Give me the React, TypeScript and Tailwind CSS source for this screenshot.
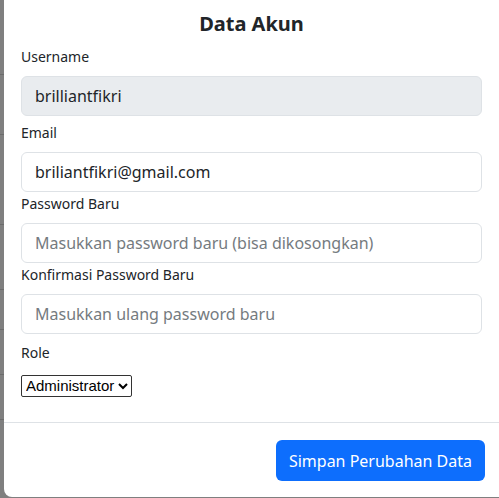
import { useState } from "react";

const fontStack = {
  fontFamily: '"Noto Sans", "Open Sans", sans-serif',
};

function Field({
  label,
  value,
  placeholder,
  disabled,
  className,
}: {
  label: string;
  value?: string;
  placeholder?: string;
  disabled?: boolean;
  className?: string;
}) {
  return (
    <div className={className}>
      <label className="block text-[14px] leading-[20px] text-[#212529] mb-[9px]">
        {label}
      </label>
      <input
        type="text"
        defaultValue={value}
        placeholder={placeholder}
        disabled={disabled}
        className={`block w-full h-[40px] px-[13px] text-[16px] text-[#212529] border border-[#dee2e6] rounded-[6px] outline-none placeholder:text-[#757b80] ${
          disabled ? "bg-[#e9ecef]" : "bg-white"
        }`}
      />
    </div>
  );
}

function App() {
  const [role, setRole] = useState("admin");

  return (
    <div className="flex h-[498px] w-[499px] overflow-hidden bg-[#7f7f7f]" style={fontStack}>
      {/* backdrop peeking out on the left */}
      <div className="w-[4px] flex flex-col">
        <div className="h-[75px] border-b border-[#6c6c6c]" />
        <div className="h-[60px] border-b border-[#6c6c6c]" />
        <div className="h-[90px] border-b border-[#6c6c6c]" />
        <div className="h-[65px] border-b border-[#6c6c6c]" />
        <div className="h-[40px] border-b border-[#6c6c6c]" />
        <div className="h-[45px] border-b border-[#6c6c6c]" />
        <div className="h-[45px] border-b border-[#6c6c6c]" />
      </div>

      <div className="flex-1 h-[497px] bg-white rounded-bl-[8px] flex flex-col">
        <div className="pt-[11px] px-[17px]">
          <h2 className="text-center text-[20px] leading-[26px] font-bold text-[#212529]">
            Data Akun
          </h2>

          <Field
            className="mt-[10px]"
            label="Username"
            value="brilliantfikri"
            disabled
          />
          <Field
            className="mt-[7px]"
            label="Email"
            value="briliantfikri@gmail.com"
          />
          <Field
            className="mt-[2px]"
            label="Password Baru"
            placeholder="Masukkan password baru (bisa dikosongkan)"
          />
          <Field
            className="mt-[2px]"
            label="Konfirmasi Password Baru"
            placeholder="Masukkan ulang password baru"
          />

          <div className="mt-[9px]">
            <label className="block text-[14px] leading-[20px] text-[#212529] mb-[10px]">
              Role
            </label>
            <select
              value={role}
              onChange={(e) => setRole(e.target.value)}
              className="h-[22px] border border-[#333] rounded-[2px] text-[15px] text-black bg-white"
              style={{ fontFamily: '"Liberation Sans", Arial, sans-serif' }}
            >
              <option value="admin">Administrator</option>
              <option value="user">User</option>
            </select>
          </div>
        </div>

        <div className="mt-[25px] border-t border-[#dee2e6]" />

        <div className="flex justify-end pr-[14px] pt-[17px]">
          <button className="h-[41px] px-[13px] rounded-[6px] bg-[#0d6efd] text-white text-[16px]">
            Simpan Perubahan Data
          </button>
        </div>
      </div>
    </div>
  );
}

export default App;
